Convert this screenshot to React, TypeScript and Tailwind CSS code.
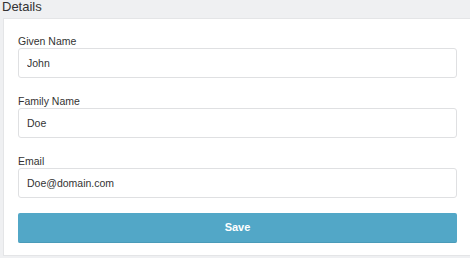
const fields = [
  { label: "Given Name", value: "John" },
  { label: "Family Name", value: "Doe" },
  { label: "Email", value: "Doe@domain.com" },
];

const App = () => {
  return (
    <div
      className="w-[470px] h-[258px] overflow-hidden bg-[#eff0f2] text-[#333]"
      style={{ fontFamily: '"Liberation Sans", Arial, sans-serif' }}
    >
      {/* Header */}
      <div className="h-[18px] pl-[2px] text-[13px] leading-[14px] font-medium pt-[0px]">
        Details
      </div>

      {/* Form panel */}
      <div className="ml-[3px] w-[469px] h-[238px] bg-white border border-[#e4e5e7] px-[14px] pt-[15px]">
        <div className="flex flex-col gap-[16px]">
          {fields.map((f) => (
            <div key={f.label} className="flex flex-col">
              <label className="text-[10.5px] leading-[14px] text-[#333]">{f.label}</label>
              <input
                defaultValue={f.value}
                className="w-[439px] h-[30px] px-[8px] border border-[#dfe0e2] rounded-[3px] text-[10.5px] text-[#333] outline-none"
              />
            </div>
          ))}
        </div>
        <button className="mt-[15px] w-[439px] h-[30px] bg-[#52a7c7] border-b border-[#4a9bb9] rounded-[2px] text-white text-[11px] font-bold">
          Save
        </button>
      </div>
    </div>
  );
};

export default App;
